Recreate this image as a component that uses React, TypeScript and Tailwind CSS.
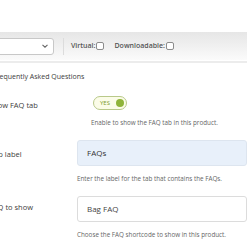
import React from "react";

export default function App() {
  const font = { fontFamily: '"Open Sans", "Noto Sans", Arial, sans-serif' };
  return (
    <div className="w-[247px] h-[247px] bg-white overflow-hidden relative" style={font}>
      <div className="h-[32px]" />
      {/* toolbar */}
      <div className="h-[28px] bg-gradient-to-b from-[#e6e6e6] to-[#fbfbfb] flex items-center">
        <div className="ml-[-20px] w-[74px] h-[17px] bg-white border border-[#c8c8c8] rounded-[3px] flex items-center justify-end pr-[5px]">
          <svg width="6" height="4" viewBox="0 0 6 4">
            <path d="M0.5 0.8 L3 3.2 L5.5 0.8" stroke="#666" strokeWidth="1.1" fill="none" />
          </svg>
        </div>
        <div className="ml-[9px] w-px h-[17px] bg-[#dcdcdc]" />
        <span className="ml-[7px] text-[7px] text-[#555] font-semibold">Virtual:</span>
        <span className="ml-[1px] w-[8px] h-[8px] rounded-[2px] border border-[#8c8c8c] bg-white" />
        <span className="ml-[10px] text-[7px] text-[#555] font-semibold">Downloadable:</span>
        <span className="ml-[1px] w-[8px] h-[8px] rounded-[2px] border border-[#8c8c8c] bg-white" />
      </div>
      <div className="h-[1px] bg-white" />
      <div className="h-[2px] bg-[#ececec]" />
      {/* header */}
      <div className="ml-[-7px] mt-[9px] text-[7px] text-[#3c3c3c] leading-[9px] whitespace-nowrap">Frequently Asked Questions</div>

      <div className="ml-[-11px] mt-[15px] flex flex-col">
        {/* row 1 */}
        <div className="flex">
          <div className="w-[102px] pt-[4px] text-[7.5px] text-[#3c3c3c] leading-[10px] whitespace-nowrap">Show FAQ tab</div>
          <div className="flex flex-col">
            <div className="ml-[2px] w-[34px] h-[14px] rounded-full border border-[#b9c98a] bg-[#fbfce8] flex items-center justify-between pl-[6px] pr-[2px]">
              <span className="text-[6px] text-[#7a9a2a] leading-none">YES</span>
              <span className="w-[8px] h-[8px] rounded-full bg-[#8fb43a]" />
            </div>
            <div className="mt-[9px] text-[6.3px] text-[#666] leading-[7px] whitespace-nowrap">Enable to show the FAQ tab in this product.</div>
          </div>
        </div>
        {/* row 2 */}
        <div className="flex mt-[14px]">
          <div className="w-[102px] pl-[1px] pt-[9px] text-[7.5px] text-[#3c3c3c] leading-[10px] whitespace-nowrap">Tab label</div>
          <div className="flex flex-col">
            <div className="w-[170px] h-[26px] bg-[#e8f0fa] border border-[#dde5ef] rounded-[3px] flex items-center pl-[9px] text-[8px] text-[#333]">FAQs</div>
            <div className="mt-[9px] text-[6.3px] text-[#666] leading-[7px] whitespace-nowrap">Enter the label for the tab that contains the FAQs.</div>
          </div>
        </div>
        {/* row 3 */}
        <div className="flex mt-[14px]">
          <div className="w-[102px] pt-[6px] text-[7.5px] text-[#3c3c3c] leading-[10px] whitespace-nowrap">FAQ to show</div>
          <div className="flex flex-col">
            <div className="w-[170px] h-[26px] bg-white border border-[#dcdcdc] rounded-[3px] flex items-center pl-[9px] text-[8px] text-[#444]">Bag FAQ</div>
            <div className="mt-[9px] text-[6.3px] text-[#666] leading-[7px] whitespace-nowrap">Choose the FAQ shortcode to show in this product.</div>
          </div>
        </div>
      </div>
    </div>
  );
}
